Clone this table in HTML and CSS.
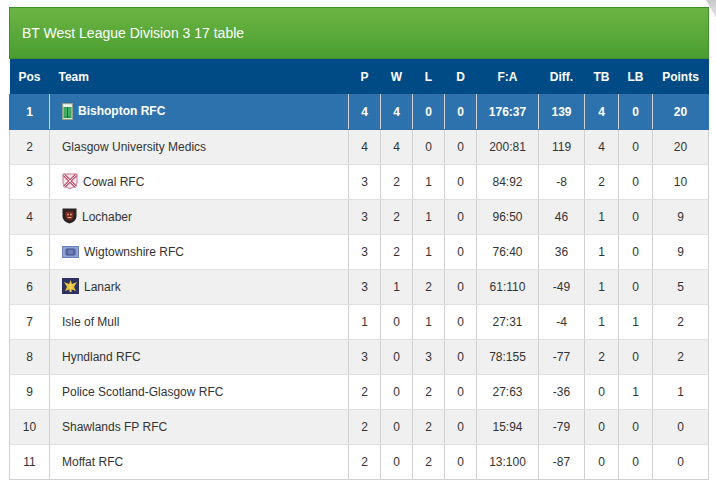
FILE: index.html
```html
<!DOCTYPE html>
<html>
<head>
<meta charset="utf-8">
<link rel="stylesheet" href="styles.css">
</head>
<body>
<div class="corner"></div>
<div class="panel">
  <div class="panel-title">BT West League Division 3 17 table</div>
  <table class="league">
    <colgroup>
      <col class="c-pos"><col class="c-team"><col class="c-n"><col class="c-n"><col class="c-n"><col class="c-n"><col class="c-fa"><col class="c-diff"><col class="c-b"><col class="c-b"><col class="c-pts">
    </colgroup>
    <thead>
      <tr><th>Pos</th><th class="team">Team</th><th>P</th><th>W</th><th>L</th><th>D</th><th>F:A</th><th>Diff.</th><th>TB</th><th>LB</th><th>Points</th></tr>
    </thead>
    <tbody>
      <tr class="hl"><td>1</td><td class="team"><svg class="logo" width="11" height="17" viewBox="0 0 11 17"><rect x="0.5" y="0.5" width="10" height="16" fill="#d9e6d6" stroke="#8fa08f"/><rect x="2" y="2" width="7" height="2" fill="#f2f2f2"/><rect x="1.5" y="4" width="8" height="11" fill="#2f9c55"/><path d="M2.5 6h6M2.5 8h6M2.5 10h6M2.5 12h6" stroke="#5cc07a" stroke-width="1"/><path d="M5.5 4v11" stroke="#1d6b37"/></svg>Bishopton RFC</td><td>4</td><td>4</td><td>0</td><td>0</td><td>176:37</td><td>139</td><td>4</td><td>0</td><td>20</td></tr>
      <tr class="alt"><td>2</td><td class="team">Glasgow University Medics</td><td>4</td><td>4</td><td>0</td><td>0</td><td>200:81</td><td>119</td><td>4</td><td>0</td><td>20</td></tr>
      <tr><td>3</td><td class="team"><svg class="logo" width="16" height="16" viewBox="0 0 16 16"><path d="M1 1h14v8c0 3.5-3 5.5-7 6.5C4 14.5 1 12.5 1 9z" fill="#f4e4e8" stroke="#c7728a" stroke-width="1"/><path d="M2 2l12 12M14 2L2 14" stroke="#c04a6a" stroke-width="3"/><path d="M2 2l12 12M14 2L2 14" stroke="#f8e8ec" stroke-width="1"/></svg>Cowal RFC</td><td>3</td><td>2</td><td>1</td><td>0</td><td>84:92</td><td>-8</td><td>2</td><td>0</td><td>10</td></tr>
      <tr class="alt"><td>4</td><td class="team"><svg class="logo" width="15" height="16" viewBox="0 0 15 16"><path d="M0.5 0.5h14v7.5c0 4-3.2 6.5-7 7.5C3.7 14.5 0.5 12 0.5 8z" fill="#2b2322"/><path d="M3.5 3.5h8v4.5c0 2.2-1.7 3.8-4 4.4C5.2 11.8 3.5 10.2 3.5 8z" fill="#7a2a20"/><circle cx="6" cy="6.5" r="1" fill="#c9a07a"/><circle cx="9" cy="6.5" r="1" fill="#c9a07a"/><path d="M5.5 9.5h4" stroke="#d0b090"/></svg>Lochaber</td><td>3</td><td>2</td><td>1</td><td>0</td><td>96:50</td><td>46</td><td>1</td><td>0</td><td>9</td></tr>
      <tr><td>5</td><td class="team"><svg class="logo" width="17" height="12" viewBox="0 0 17 12"><rect x="0.5" y="0.5" width="16" height="11" fill="#8ea2d4" stroke="#6f82b8"/><path d="M3 4h11M3 6h11M3 8h11" stroke="#4b5c96" stroke-width="1"/><rect x="5" y="3" width="7" height="6" fill="none" stroke="#3f4f88"/></svg>Wigtownshire RFC</td><td>3</td><td>2</td><td>1</td><td>0</td><td>76:40</td><td>36</td><td>1</td><td>0</td><td>9</td></tr>
      <tr class="alt"><td>6</td><td class="team"><svg class="logo" width="17" height="16" viewBox="0 0 17 16"><rect width="17" height="16" fill="#2c3160"/><path d="M8.5 2l1.5 4 5-2-3 5 2 4-5.5-2-5.5 2 2-4-3-5 5 2z" fill="#e8c23a"/><rect x="7.5" y="6" width="2" height="8" fill="#f1d560"/></svg>Lanark</td><td>3</td><td>1</td><td>2</td><td>0</td><td>61:110</td><td>-49</td><td>1</td><td>0</td><td>5</td></tr>
      <tr><td>7</td><td class="team">Isle of Mull</td><td>1</td><td>0</td><td>1</td><td>0</td><td>27:31</td><td>-4</td><td>1</td><td>1</td><td>2</td></tr>
      <tr class="alt"><td>8</td><td class="team">Hyndland RFC</td><td>3</td><td>0</td><td>3</td><td>0</td><td>78:155</td><td>-77</td><td>2</td><td>0</td><td>2</td></tr>
      <tr><td>9</td><td class="team">Police Scotland-Glasgow RFC</td><td>2</td><td>0</td><td>2</td><td>0</td><td>27:63</td><td>-36</td><td>0</td><td>1</td><td>1</td></tr>
      <tr class="alt"><td>10</td><td class="team">Shawlands FP RFC</td><td>2</td><td>0</td><td>2</td><td>0</td><td>15:94</td><td>-79</td><td>0</td><td>0</td><td>0</td></tr>
      <tr><td>11</td><td class="team">Moffat RFC</td><td>2</td><td>0</td><td>2</td><td>0</td><td>13:100</td><td>-87</td><td>0</td><td>0</td><td>0</td></tr>
    </tbody>
  </table>
</div>
</body>
</html>
```

FILE: styles.css
```css
html, body {
  margin: 0;
  padding: 0;
  background: #fff;
}
body {
  font-family: "Liberation Sans", Arial, sans-serif;
  padding: 7px 0 0 9px;
}
.corner {
  position: absolute;
  top: 0;
  right: 0;
  width: 10px;
  height: 18px;
  background: linear-gradient(to bottom, #c8c8c8, #e6e6e6);
  clip-path: polygon(0 0, 100% 0, 100% 100%);
}
.panel {
  width: 700px;
}
.panel-title {
  box-sizing: border-box;
  height: 52px;
  border: 1px solid #3f8e2a;
  background: linear-gradient(to bottom, #6cb543, #4a9e31);
  color: #fff;
  font-size: 14px;
  line-height: 50px;
  padding-left: 12px;
}
.league {
  width: 700px;
  table-layout: fixed;
  border-collapse: collapse;
  font-size: 12px;
  color: #333;
}
.c-pos { width: 40px; }
.c-team { width: 299px; }
.c-n { width: 32px; }
.c-fa { width: 62px; }
.c-diff { width: 46px; }
.c-b { width: 34px; }
.c-pts { width: 56px; }
.league th {
  background: #004a85;
  color: #fff;
  font-weight: bold;
  height: 35px;
  padding: 0;
  text-align: center;
  border: 0;
}
.league th.team {
  text-align: left;
  padding-left: 9px;
}
.league td {
  height: 34px;
  padding: 0;
  text-align: center;
  border: 1px solid #d0d0d0;
  border-top-color: #e0e0e0;
  border-bottom-color: #e0e0e0;
  white-space: nowrap;
}
.league tbody tr:last-child td {
  border-bottom-color: #d0d0d0;
}
.league td.team {
  text-align: left;
  padding-left: 12px;
}
.league tr.alt td {
  background: #f0f0f0;
}
.league tr.hl td {
  background: #2e72ad;
  color: #fff;
  font-weight: bold;
  border-top-color: #2e72ad;
  border-bottom-color: #2e72ad;
}
.league tr.hl td:first-child {
  border-left-color: #2e72ad;
}
.league tr.hl td:last-child {
  border-right-color: #2e72ad;
}
.logo {
  display: inline-block;
  vertical-align: middle;
  margin-right: 5px;
  margin-top: -2px;
}
```
